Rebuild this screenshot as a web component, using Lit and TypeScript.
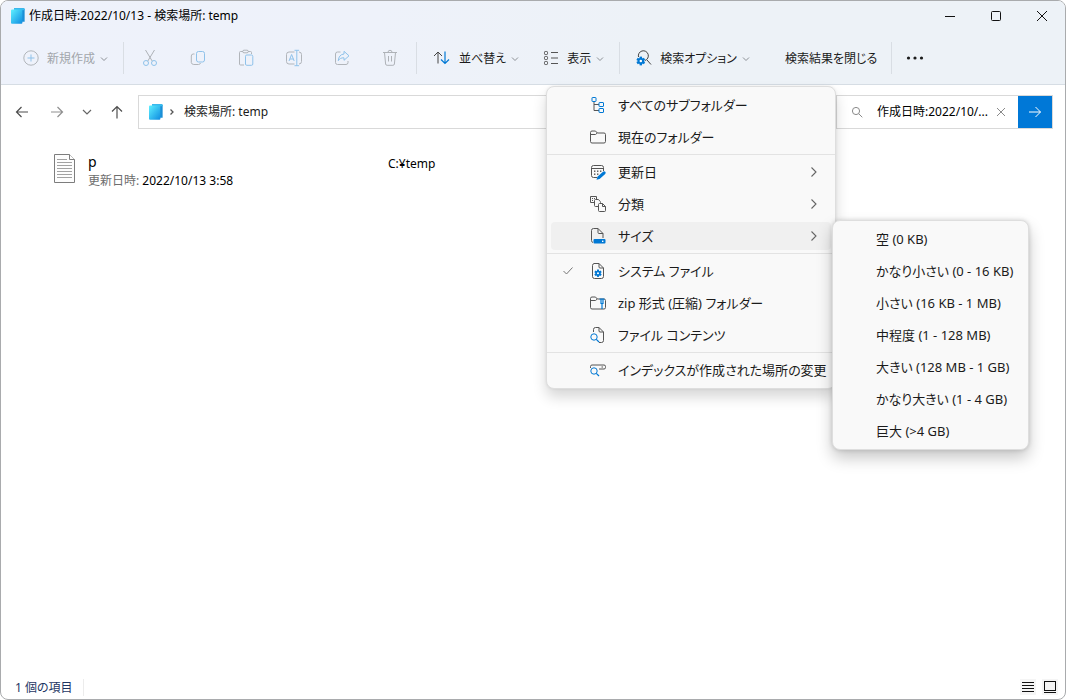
import { LitElement, html, css, svg, nothing } from "lit";
import { customElement, property } from "lit/decorators.js";
import { unsafeSVG } from "lit/directives/unsafe-svg.js";

type Glyph = { w: number; h: number; body: string };

const G = (w: number, h: number, body: string): Glyph => ({ w, h, body });

const GEAR = (x: number, y: number, s: number) =>
  `<g transform="translate(${x} ${y}) scale(${s})" stroke="none"><circle r="3.2" fill="#0078d4"/><g fill="#0078d4"><rect x="-1.3" y="-4.6" width="2.6" height="9.2"/><rect x="-1.3" y="-4.6" width="2.6" height="9.2" transform="rotate(60)"/><rect x="-1.3" y="-4.6" width="2.6" height="9.2" transform="rotate(120)"/></g><circle r="1.3" fill="#fff"/></g>`;

const GLYPHS: Record<string, Glyph> = {
  book: G(16, 18, `<path d="M4 1.2h9.6a1 1 0 0 1 1 1v12.6H5z" fill="#1b8fd6"/><path d="M4 1.2h9.6a1 1 0 0 1 1 1v1H4z" fill="#35bdf0"/><path d="M1 3.6a1 1 0 0 1 1-1h9.4a1 1 0 0 1 1 1v12.2a1 1 0 0 1-1 1H2a1 1 0 0 1-1-1z" fill="url(#bk)"/><defs><linearGradient id="bk" x1="0" y1="0" x2="1" y2="1"><stop offset="0" stop-color="#5ff0ff"/><stop offset=".5" stop-color="#35bdf0"/><stop offset="1" stop-color="#0f8be0"/></linearGradient></defs>`),
  add: G(16, 16, `<circle cx="8" cy="8" r="7.2" stroke="#b1b5ba"/><path d="M8 4.5v7M4.5 8h7" stroke="#8fc2ea"/>`),
  down: G(8, 6, `<path d="M1 1.5l3 3 3-3" stroke="#8b8f94"/>`),
  cut: G(16, 18, `<path d="M3.5 1l6.8 11.2M12.5 1L5.7 12.2" stroke="#aeb2b7"/><circle cx="4" cy="14" r="2.5" stroke="#8fc2ea"/><circle cx="12" cy="14" r="2.5" stroke="#8fc2ea"/>`),
  copy: G(16, 16, `<path d="M4.5 4H3.2A2 2 0 0 0 1.300 6v6.500A2.500 2.500 0 0 0 3.800 14.500H8.500a2 2 0 0 0 2-1.500" stroke="#b1b5ba"/><rect x="6.500" y="1.500" width="8" height="10.500" rx="2" stroke="#8fc2ea"/>`),
  paste: G(16, 18, `<path d="M5 2.500H2.500a1 1 0 0 0-1 1V15a1 1 0 0 0 1 1H6M10 2.500h2.500a1 1 0 0 1 1 1V5" stroke="#b1b5ba"/><rect x="4.700" y="1.200" width="5.600" height="2.600" rx="1.300" stroke="#b1b5ba"/><rect x="7.500" y="6" width="7.300" height="10.300" rx="1.300" stroke="#8fc2ea"/>`),
  rename: G(18, 18, `<path d="M9.500 3H4a2.500 2.500 0 0 0-2.500 2.500v7A2.500 2.500 0 0 0 4 15h5.500M14 3a2.500 2.500 0 0 1 2.500 2.500v7A2.500 2.500 0 0 1 14 15" stroke="#b1b5ba"/><path d="M9.500 1.300h4.600M9.500 16.700h4.600M11.800 1.300v15.400M4 12l2.600-6.500L9.200 12M4.800 10h3.600" stroke="#8fc2ea"/>`),
  share: G(16, 16, `<path d="M6.500 2H3.500a2 2 0 0 0-2 2v8.500a2 2 0 0 0 2 2H12a2 2 0 0 0 2-2V11" stroke="#b1b5ba"/><path d="M10 1.300l5 4.500-5 4.500V7.800C7.200 7.700 5.400 8.700 4.300 10.700 4.500 6.900 6.400 4.300 10 4z" stroke="#8fc2ea" stroke-linejoin="round"/>`),
  bin: G(16, 18, `<path d="M1 3.500h14M2.500 3.500L3.600 15a1.500 1.500 0 0 0 1.500 1.300h5.800a1.500 1.500 0 0 0 1.500-1.300l1.100-11.500M6 3.300a2 2 0 0 1 4 0M6.500 7v5.500M9.500 7v5.500" stroke="#aeb2b7"/>`),
  sort: G(18, 16, `<path d="M5 13.500V2M1 6l4-4 4 4" stroke="#454545"/><path d="M12 1.500V13.500M8 9.500l4 4 4-4" stroke="#0078d4" stroke-width="1.200"/>`),
  view: G(16, 16, `<rect x="1.500" y="1.500" width="3" height="3" rx=".8" stroke="#555"/><rect x="1.500" y="6.500" width="3" height="3" rx=".8" stroke="#555"/><rect x="1.500" y="11.500" width="3" height="3" rx=".8" stroke="#555"/><path d="M8 2.500h7M8 8h7M8 13.500h7" stroke="#555"/>`),
  options: G(16, 16, `<path d="M2.500 7a5 5 0 1 1 6.500 3.500M11 10l4 4.500" stroke="#444"/>` + GEAR(4.8, 11, 0.95)),
  dots: G(18, 6, `<g fill="#1b1b1b" stroke="none"><circle cx="2.500" cy="3" r="1.600"/><circle cx="9" cy="3" r="1.600"/><circle cx="15.500" cy="3" r="1.600"/></g>`),
  min: G(12, 12, `<path d="M1 6.500h10" stroke="#111"/>`),
  max: G(12, 12, `<rect x="1.500" y="1.500" width="9" height="9" rx="1" stroke="#111"/>`),
  close: G(12, 12, `<path d="M1 1l10 10M11 1L1 11" stroke="#111"/>`),
  back: G(14, 14, `<path d="M13 7H1.500M6.500 2l-5 5 5 5" stroke="#4d4d4d" stroke-width="1.200"/>`),
  fwd: G(14, 14, `<path d="M1 7h11.500M7.500 2l5 5-5 5" stroke="#8f8f8f" stroke-width="1.200"/>`),
  recent: G(10, 8, `<path d="M1 2l4 4 4-4" stroke="#666" stroke-width="1.200"/>`),
  up: G(14, 14, `<path d="M7 13.500V1.500M2 6.500l5-5 5 5" stroke="#4d4d4d" stroke-width="1.200"/>`),
  crumb: G(6, 8, `<path d="M1.500 1.500L4 4 1.500 6.500" stroke="#555" stroke-width="1.300"/>`),
  search: G(12, 12, `<circle cx="5" cy="5" r="3.600" stroke="#8a8a8a"/><path d="M7.700 7.700l3.600 3.600" stroke="#8a8a8a"/>`),
  clear: G(10, 10, `<path d="M1 1l8 8M9 1L1 9" stroke="#8a8a8a"/>`),
  go: G(14, 14, `<path d="M1 7h11.500M7.500 2l5 5-5 5" stroke="#fff"/>`),
  file: G(22, 29, `<path d="M.5.5h15l5 5v23H.5z" fill="#fdfdfd" stroke="#7d7d7d"/><path d="M15.500.5v5h5" fill="#fff" stroke="#7d7d7d"/><path d="M3 5.500h10M3 8.500h15M3 11.500h15M3 14.500h15M3 17.500h15M3 20.500h15M3 23.500h15" stroke="#a2a2a2"/>`),
  tree: G(16, 18, `<path d="M4 6v8.500h5M4 8.500h5" stroke="#555"/><rect x="2" y="1.500" width="4" height="4" rx=".5" stroke="#0078d4"/><rect x="9" y="6.500" width="4.500" height="4" rx=".5" stroke="#0078d4"/><rect x="9" y="12.500" width="4.500" height="4" rx=".5" stroke="#0078d4"/>`),
  folder: G(18, 16, `<path d="M1.500 3.500a1.500 1.500 0 0 1 1.500-1.500h3.500l1.800 2H15a1.500 1.500 0 0 1 1.500 1.500v7A1.500 1.500 0 0 1 15 14H3a1.500 1.500 0 0 1-1.500-1.500zM1.500 5.500h5l1.800-1.500" stroke="#555"/>`),
  date: G(18, 18, `<path d="M8 14.500H4.500a2 2 0 0 1-2-2v-8a2 2 0 0 1 2-2h8a2 2 0 0 1 2 2V8M2.500 5.500h12" stroke="#555"/><g fill="#555" stroke="none"><rect x="5" y="7.500" width="1.400" height="1.400"/><rect x="8" y="7.500" width="1.400" height="1.400"/><rect x="11" y="7.500" width="1.400" height="1.400"/><rect x="5" y="10.500" width="1.400" height="1.400"/><rect x="8" y="10.500" width="1.400" height="1.400"/></g><path d="M7.500 16.800l.9-3 5.600-5a1.500 1.500 0 0 1 2.200 2.200l-5.600 5z" fill="#0078d4" stroke="none"/>`),
  kind: G(18, 18, `<path d="M6 7.500H1.500v-6h6V4" stroke="#555"/><g fill="#555" stroke="none"><rect x="3" y="3" width="1" height="1"/><rect x="5" y="3" width="1" height="1"/><rect x="3" y="5" width="1" height="1"/></g><path d="M10 11.500H6.500A1 1 0 0 1 5.500 10.500v-5a1 1 0 0 1 1-1h2.800l2.200 2.200v1" stroke="#555"/><path d="M10.500 8.500h3l3 3v4a1 1 0 0 1-1 1h-5a1 1 0 0 1-1-1v-6a1 1 0 0 1 1-1zM13.500 8.500v3h3" stroke="#555"/>`),
  size: G(18, 18, `<path d="M4 15.500a2 2 0 0 1-1.500-2v-10a2 2 0 0 1 2-2H9l5 5V11M9 1.500v4a1 1 0 0 0 1 1h4" stroke="#555"/><rect x="4.500" y="12" width="12" height="4.500" rx="1" fill="#0078d4" stroke="none"/><rect x="13" y="13.600" width="1.400" height="1.400" fill="#fff" stroke="none"/>`),
  system: G(18, 18, `<path d="M5 1.500h5l4.500 4.500v8.500a2 2 0 0 1-2 2H5.500a2 2 0 0 1-2-2V3.500a2 2 0 0 1 2-2zM10 1.500V5a1 1 0 0 0 1 1h3.500" stroke="#555"/>` + GEAR(9, 11.2, 0.8)),
  zip: G(18, 16, `<path d="M1.500 3.500a1.500 1.500 0 0 1 1.500-1.500h3.500l1.800 2H15a1.500 1.500 0 0 1 1.500 1.500v7A1.500 1.500 0 0 1 15 14H3a1.500 1.500 0 0 1-1.500-1.500zM1.500 5.500h5l1.800-1.500" stroke="#555"/><path d="M10.500 4h5M12 4v4.500h2V4M13 8.500V14" stroke="#0078d4" stroke-width="1.200"/>`),
  content: G(18, 18, `<path d="M4.500 6V3.500a2 2 0 0 1 2-2H10L14.500 6v8.500a2 2 0 0 1-2 2H10M10 1.500V5a1 1 0 0 0 1 1h3.500" stroke="#555"/><circle cx="5" cy="11" r="3.200" stroke="#0078d4"/><path d="M7.300 13.300L10 16" stroke="#0078d4" stroke-width="1.200"/>`),
  index: G(18, 16, `<path d="M1.500 6V4.500a1.500 1.500 0 0 1 1.500-1.500h12a1.500 1.500 0 0 1 1.500 1.500v1A1.500 1.500 0 0 1 15 7h-5M12.500 5h1.500" stroke="#555"/><circle cx="5" cy="9" r="3.200" stroke="#0078d4"/><path d="M7.300 11.300L10 14" stroke="#0078d4" stroke-width="1.200"/>`),
  check: G(12, 10, `<path d="M1.500 5l3 3L10.500 1.500" stroke="#777"/>`),
  right: G(8, 12, `<path d="M1.500 1.500L6 6l-4.500 4.500" stroke="#666" stroke-width="1.100"/>`),
  details: G(16, 16, `<path d="M2 3.500h12M2 6.500h12M2 9.500h12M2 12.500h12" stroke="#111"/>`),
  large: G(16, 16, `<rect x="2.500" y="2.500" width="11" height="9" stroke="#111"/><path d="M2 13.500h12" stroke="#111"/>`),
};

@customElement("x-glyph")
class XGlyph extends LitElement {
  @property() name = "";
  static styles = css`
    :host { display: inline-flex; flex: none; }
    svg { display: block; fill: none; }
  `;
  render() {
    const g = GLYPHS[this.name];
    return g
      ? html`<svg width=${g.w} height=${g.h} viewBox="0 0 ${g.w} ${g.h}" aria-hidden="true">${svg`${unsafeSVG(g.body)}`}</svg>`
      : nothing;
  }
}

type Item = { icon: string; label: string; sub?: boolean; checked?: boolean; open?: boolean };

const GROUPS: Item[][] = [
  [
    { icon: "tree", label: "すべてのサブフォルダー" },
    { icon: "folder", label: "現在のフォルダー" },
  ],
  [
    { icon: "date", label: "更新日", sub: true },
    { icon: "kind", label: "分類", sub: true },
    { icon: "size", label: "サイズ", sub: true, open: true },
  ],
  [
    { icon: "system", label: "システム ファイル", checked: true },
    { icon: "zip", label: "zip 形式 (圧縮) フォルダー" },
    { icon: "content", label: "ファイル コンテンツ" },
  ],
  [{ icon: "index", label: "インデックスが作成された場所の変更" }],
];

const SIZES = [
  "空 (0 KB)",
  "かなり小さい (0 - 16 KB)",
  "小さい (16 KB - 1 MB)",
  "中程度 (1 - 128 MB)",
  "大きい (128 MB - 1 GB)",
  "かなり大きい (1 - 4 GB)",
  "巨大 (>4 GB)",
];

const TOOLS: [string, string][] = [
  ["cut", "切り取り"],
  ["copy", "コピー"],
  ["paste", "貼り付け"],
  ["rename", "名前の変更"],
  ["share", "共有"],
  ["bin", "削除"],
];

@customElement("app-root")
class AppRoot extends LitElement {
  static styles = css`
    :host {
      display: block;
      height: 100vh;
      font: 12px/16px "Noto Sans", "Noto Sans CJK JP", sans-serif;
      font-feature-settings: "palt";
      color: #1b1b1b;
      background: #fff;
    }
    * { box-sizing: border-box; }
    button, input {
      font: inherit;
      font-feature-settings: inherit;
      color: inherit;
      background: none;
      border: 0;
      margin: 0;
      padding: 0;
    }
    button { display: flex; align-items: center; white-space: nowrap; }
    .window {
      position: relative;
      height: 100%;
      display: flex;
      flex-direction: column;
      border: 1px solid #a9abad;
      border-radius: 8px;
      overflow: hidden;
    }
    .head {
      background: linear-gradient(100deg, #eef2fb 0%, #eef2fa 35%, #edf2f7 60%);
      border-bottom: 1px solid #d6dde4;
    }
    .title { display: flex; align-items: center; height: 30px; padding-left: 9px; gap: 3px; }
    .title h1 { flex: 1; margin: 0; font-size: 12px; font-weight: 400; color: #000; }
    .caps { display: flex; }
    .cap { width: 46px; height: 30px; justify-content: center; }
    .tools { display: flex; align-items: center; height: 53px; padding-left: 11px; }
    .tool { height: 36px; padding: 0 13px 0 11px; gap: 8px; }
    .tool:disabled { color: #a2a6ab; }
    .label { display: flex; align-items: center; gap: 5px; padding-top: 2px; }
    .square { width: 48px; justify-content: center; }
    .sep { width: 1px; height: 32px; background: #d9dee4; margin: 0 2px; }
    .sep + .tool { margin-left: 3px; }
    .plain { padding: 0 12px 0 22px; }
    .more { padding: 0 9px; }
    .bar { display: flex; align-items: center; padding: 10px 12px 0 3px; }
    .nav { display: flex; padding-right: 4px; }
    .nav button { width: 35px; height: 32px; justify-content: center; }
    .nav .thin { width: 25px; }
    .box { display: flex; align-items: center; height: 34px; border: 1px solid #d9d9d9; background: #fff; }
    .address { flex: 1; padding-left: 9px; gap: 5px; }
    .address a { color: #1b1b1b; text-decoration: none; padding-left: 4px; }
    .search { flex: none; width: 217px; margin-left: 12px; padding-left: 14px; }
    .search input { flex: 1; min-width: 0; padding-left: 14px; outline: 0; color: #000; }
    .search .clear { padding: 0 12px 0 2px; }
    .search .go { width: 34px; align-self: stretch; justify-content: center; background: #0078d7; }
    .files { flex: 1; margin: 0; padding: 24px 53px; list-style: none; color: #000; }
    .row { display: grid; grid-template-columns: 22px 288px 1fr; column-gap: 12px; align-items: start; }
    .name { font-size: 14px; line-height: 18px; }
    .row x-glyph { padding-top: 1px; }
    .meta { line-height: 20px; }
    .meta span { color: #6d6d6d; }
    .path { line-height: 22px; }
    .status { display: flex; align-items: center; height: 24px; padding: 0 7px 0 14px; gap: 6px; color: #1e3663; }
    .status p { flex: 1; margin: 0; padding-top: 2px; }
    .status p span { padding-right: 10px; border-right: 1px solid #ececec; }
    .status button { background: #f5f5f5; }
    .menu {
      position: absolute;
      background: #f9f9f9;
      border: 1px solid #dedede;
      border-radius: 8px;
      padding: 2px 0;
      box-shadow: 0 8px 14px rgba(0, 0, 0, 0.16), 0 0 3px rgba(0, 0, 0, 0.08);
      font-size: 13px;
      line-height: 20px;
      color: #1b1b1b;
    }
    .options { left: 545px; top: 85px; width: 290px; }
    .options hr { height: 1px; border: 0; margin: 1px 0; background: #e3e3e3; }
    .slot { position: relative; padding: 2px 4px; }
    .item { width: 100%; height: 28px; border-radius: 4px; }
    .item .tick { flex: none; width: 34px; display: flex; justify-content: center; }
    .item .pic { flex: none; width: 26px; display: flex; justify-content: center; }
    .item .text { padding-left: 7px; flex: 1; text-align: left; }
    .item .arrow { padding-right: 13px; display: flex; }
    .item.open { background: #f0f0f0; }
    .sizes { left: 285px; top: 0; width: 197px; box-shadow: 0 8px 16px rgba(0, 0, 0, 0.22), 0 0 4px rgba(0, 0, 0, 0.16); }
    .sizes .item { padding-left: 39px; }
  `;

  private item(it: Item) {
    return html`<div class="slot">
      <button
        class="item ${it.open ? "open" : ""}"
        role=${it.checked ? "menuitemcheckbox" : "menuitem"}
        aria-checked=${it.checked ? "true" : nothing}
        aria-expanded=${it.sub ? String(!!it.open) : nothing}
      >
        <span class="tick">${it.checked ? html`<x-glyph name="check"></x-glyph>` : nothing}</span>
        <span class="pic"><x-glyph name=${it.icon}></x-glyph></span>
        <span class="text">${it.label}</span>
        ${it.sub ? html`<span class="arrow"><x-glyph name="right"></x-glyph></span>` : nothing}
      </button>
      ${it.open
        ? html`<div class="menu sizes" role="menu" aria-label=${it.label}>
            ${SIZES.map((s) => html`<div class="slot"><button class="item" role="menuitem">${s}</button></div>`)}
          </div>`
        : nothing}
    </div>`;
  }

  private drop(icon: string, label: string, off = false) {
    return html`<button class="tool" ?disabled=${off} aria-haspopup="menu">
      <x-glyph name=${icon}></x-glyph>
      <span class="label">${label}<x-glyph name="down"></x-glyph></span>
    </button>`;
  }

  render() {
    return html`<div class="window">
      <header class="head">
        <div class="title">
          <x-glyph name="book"></x-glyph>
          <h1>作成日時:2022/10/13 - 検索場所: temp</h1>
          <div class="caps">
            <button class="cap" aria-label="最小化"><x-glyph name="min"></x-glyph></button>
            <button class="cap" aria-label="最大化"><x-glyph name="max"></x-glyph></button>
            <button class="cap" aria-label="閉じる"><x-glyph name="close"></x-glyph></button>
          </div>
        </div>
        <div class="tools" role="toolbar">
          ${this.drop("add", "新規作成", true)}
          <span class="sep"></span>
          ${TOOLS.map(([g, l]) => html`<button class="square" disabled aria-label=${l}><x-glyph name=${g}></x-glyph></button>`)}
          <span class="sep"></span>
          ${this.drop("sort", "並べ替え")} ${this.drop("view", "表示")}
          <span class="sep"></span>
          ${this.drop("options", "検索オプション")}
          <button class="tool plain"><span class="label">検索結果を閉じる</span></button>
          <span class="sep"></span>
          <button class="tool more" aria-label="もっと見る"><x-glyph name="dots"></x-glyph></button>
        </div>
      </header>
      <div class="bar">
        <nav class="nav">
          <button aria-label="戻る"><x-glyph name="back"></x-glyph></button>
          <button aria-label="進む"><x-glyph name="fwd"></x-glyph></button>
          <button class="thin" aria-label="最近表示した場所"><x-glyph name="recent"></x-glyph></button>
          <button aria-label="上へ"><x-glyph name="up"></x-glyph></button>
        </nav>
        <div class="box address">
          <x-glyph name="book"></x-glyph>
          <x-glyph name="crumb"></x-glyph>
          <a href="#">検索場所: temp</a>
        </div>
        <form class="box search" role="search">
          <x-glyph name="search"></x-glyph>
          <input aria-label="検索" value="作成日時:2022/10/..." />
          <button type="button" class="clear" aria-label="クリア"><x-glyph name="clear"></x-glyph></button>
          <button type="button" class="go" aria-label="検索を実行"><x-glyph name="go"></x-glyph></button>
        </form>
      </div>
      <ul class="files">
        <li class="row">
          <x-glyph name="file"></x-glyph>
          <div>
            <div class="name">p</div>
            <div class="meta"><span>更新日時:</span> 2022/10/13 3:58</div>
          </div>
          <div class="path">C:¥temp</div>
        </li>
      </ul>
      <footer class="status">
        <p><span>1 個の項目</span></p>
        <button aria-label="詳細表示"><x-glyph name="details"></x-glyph></button>
        <button aria-label="大アイコン表示"><x-glyph name="large"></x-glyph></button>
      </footer>
      <div class="menu options" role="menu" aria-label="検索オプション">
        ${GROUPS.map((g, i) => html`${i ? html`<hr />` : nothing}${g.map((it) => this.item(it))}`)}
      </div>
    </div>`;
  }
}
